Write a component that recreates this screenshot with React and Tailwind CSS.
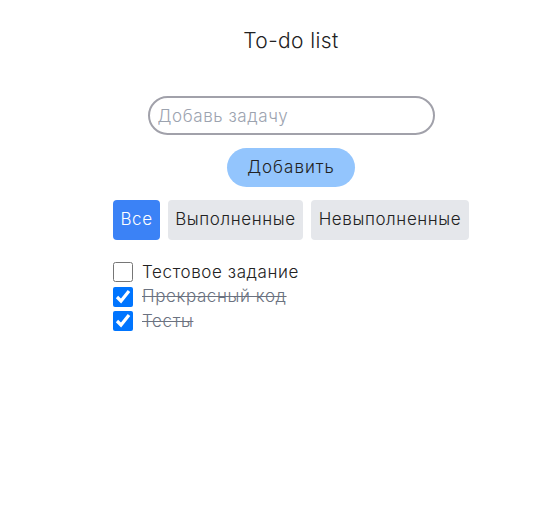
import React, { useState } from 'react';

const App = () => {
    const [text, setText] = useState('');
    const [filter, setFilter] = useState('all');
    const [todos, setTodos] = useState([
        { id: 1, title: 'Тестовое задание', done: false },
        { id: 2, title: 'Прекрасный код', done: true },
        { id: 3, title: 'Тесты', done: true },
    ]);

    const addTodo = () => {
        if (!text.trim()) return;
        setTodos([...todos, { id: Date.now(), title: text, done: false }]);
        setText('');
    };

    const toggle = (id) => {
        setTodos(todos.map(t => (t.id === id ? { ...t, done: !t.done } : t)));
    };

    const filters = [
        { key: 'all', label: 'Все', width: 'w-[47px]' },
        { key: 'done', label: 'Выполненные', width: 'w-[135px]' },
        { key: 'undone', label: 'Невыполненные', width: 'w-[158px]' },
    ];

    const visible = todos.filter(t => (filter === 'all' ? true : filter === 'done' ? t.done : !t.done));

    return (
        <div className="min-h-[512px] bg-white pl-[34px] font-['Inter','Noto_Sans',sans-serif] text-[#222] tracking-[0.6px]">
            <div className="flex flex-col items-center">
                <h1 className="mt-[29px] text-[21px] leading-[24px] font-light tracking-[0.4px]">To-do list</h1>

                <input
                    type="text"
                    value={text}
                    onChange={e => setText(e.target.value)}
                    placeholder="Добавь задачу"
                    className="mt-[43px] h-[39px] w-[287px] rounded-full border-2 border-[#a1a1aa] px-[8px] text-[17px] font-light tracking-[0.6px] outline-none placeholder:text-[#9ca3af]"
                />

                <button
                    onClick={addTodo}
                    className="mt-[13px] h-[39px] w-[128px] rounded-full bg-[#93c5fd] text-[17px] font-light tracking-[1px]"
                >
                    Добавить
                </button>

                <div className="mt-[13px] flex gap-2">
                    {filters.map(f => (
                        <button
                            key={f.key}
                            onClick={() => setFilter(f.key)}
                            className={
                                filter === f.key
                                    ? `${f.width} h-[40px] rounded bg-[#3b82f6] text-[17px] font-light text-white`
                                    : `${f.width} h-[40px] rounded bg-[#e5e7eb] text-[17px] font-light`
                            }
                        >
                            {f.label}
                        </button>
                    ))}
                </div>

                <div className="mt-[20px] flex w-[356px] flex-col">
                    {visible.map(t => (
                        <label key={t.id} className="flex h-[24.5px] items-center gap-[9px]">
                            <input
                                type="checkbox"
                                checked={t.done}
                                onChange={() => toggle(t.id)}
                                className="m-0 h-[20px] w-[20px]"
                            />
                            <span className={t.done ? 'text-[17px] font-light text-[#6b7280] line-through' : 'text-[17px] font-light'}>
                                {t.title}
                            </span>
                        </label>
                    ))}
                </div>
            </div>
        </div>
    );
};

export default App;
